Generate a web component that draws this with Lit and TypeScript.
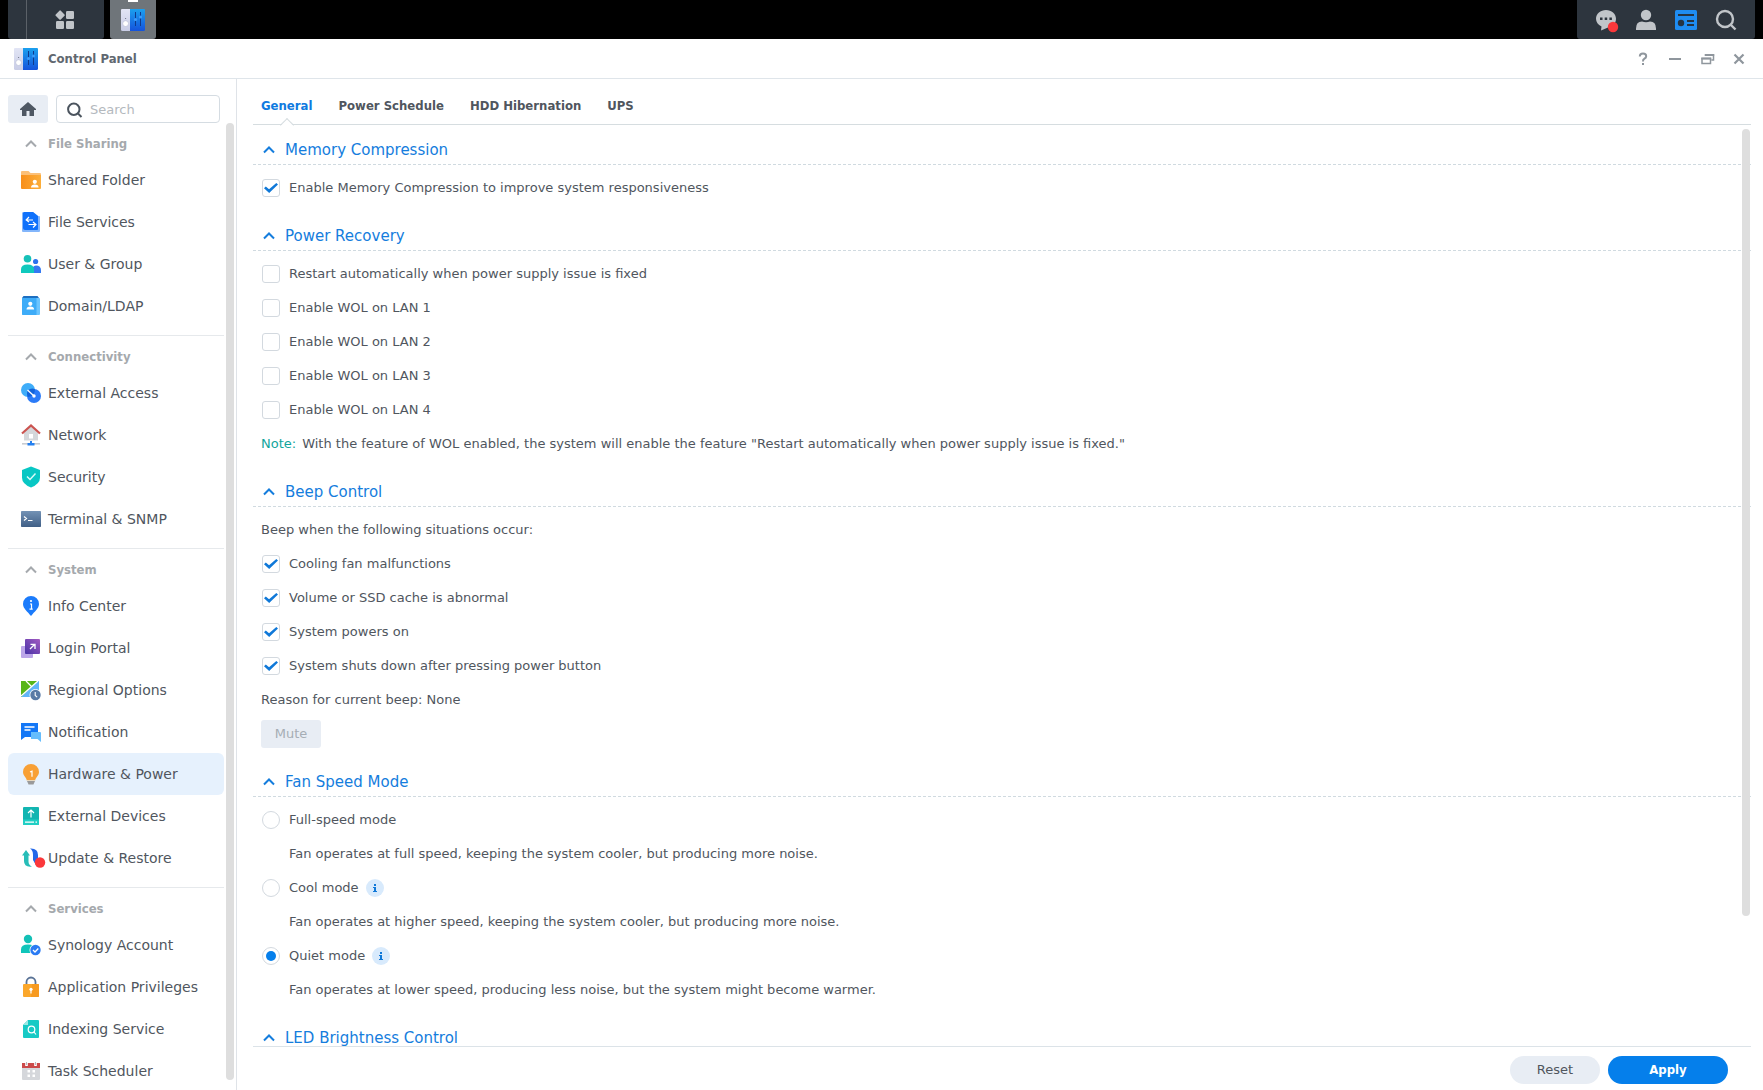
import { LitElement, html, css, svg } from "lit";
import { customElement, property, state } from "lit/decorators.js";
import { classMap } from "lit/directives/class-map.js";

const panelIcon = html`<svg width="24" height="22" viewBox="0 0 24 22" aria-hidden="true">
  <defs>
    <linearGradient id="blue" x1="0" y1="0" x2="0" y2="1"><stop offset="0" stop-color="#1ba0ee" /><stop offset="1" stop-color="#1453dc" /></linearGradient>
    <linearGradient id="pale" x1="0" y1="0" x2="0" y2="1"><stop offset="0" stop-color="#e2e5f5" /><stop offset="1" stop-color="#c9cde6" /></linearGradient>
  </defs>
  <path d="M1 0h8v22H1.500Q0 22 0 20.500V1Q0 0 1 0z" fill="url(#pale)" />
  <path d="M9 0h14q1 0 1 1v19.500q0 1.500-1.500 1.500H9z" fill="url(#blue)" />
  <circle cx="4.600" cy="14.600" r="2.900" fill="#fff" stroke="#b4b9d4" stroke-width=".6" />
  <circle cx="4.600" cy="9.500" r=".6" fill="#666c80" />
  <path d="M14.500 3v14M19.500 3v14" stroke="#0f3a8c" stroke-width="1" />
  <circle cx="14.500" cy="10.500" r="1.600" fill="#3b9bfa" />
  <circle cx="19.500" cy="8" r="1.600" fill="#3b9bfa" />
</svg>`;

const chevron = html`<svg width="12" height="8" viewBox="0 0 12 8" fill="none" stroke="currentColor" stroke-width="2" aria-hidden="true"><path d="M1 6.500 6 1.500l5 5" /></svg>`;

const icons: Record<string, unknown> = {
  folder: svg`<path d="M1 3q0-1 1-1h6.500l2 2H20q1 0 1 1v4H1z" fill="#fcc078"/><path d="M1 6h20v13q0 1-1 1H2q-1 0-1-1z" fill="url(#g)"/><defs><linearGradient id="g"><stop offset="0" stop-color="#f88f1b"/><stop offset="1" stop-color="#fcae3a"/></linearGradient></defs><circle cx="14.800" cy="12.800" r="2.100" fill="#fff"/><path d="M11 18.500q0-3 3.800-3t3.800 3z" fill="#fff"/>`,
  files: svg`<path d="M4 1h9l5 4h1q1 0 1 1v14q0 1-1 1H3q-1 0-1-1V2q0-1 2-1z" fill="#83b6fb"/><path d="M4 1h9l5 4v13q0 1-1 1H5q-2 0-2-2V2z" fill="#0f71fb"/><path d="M13 9H6.500m2.500-3L6.200 9 9 11M8.500 13.500h7m-2.500-2.500 3 2.500-3 3" fill="none" stroke="#fff" stroke-width="1.200"/>`,
  group: svg`<circle cx="7.500" cy="5.700" r="3.800" fill="#17c1b8"/><circle cx="15.600" cy="8.500" r="2.600" fill="#2a72ee"/><path d="M13 20v-6q1-1.500 3-1.500 5 0 5 5V20z" fill="#3479f2"/><path d="M1 20v-3.500Q1 11.500 7.500 11.500T14 16.500V20z" fill="#10c9bd"/>`,
  domain: svg`<path d="M3.500 1h14l1.500 2H2z" fill="#1d6fc0"/><path d="M2 3h17q1 0 1 1v15q0 1-1 1H3q-1 0-1-1z" fill="#6cc5ff"/><path d="M2 3h14.500v17H3q-1 0-1-1z" fill="#3eacf8"/><circle cx="10.300" cy="8.800" r="2.100" fill="#fff"/><path d="M6.500 14.500q0-3 3.800-3t3.800 3z" fill="#fff"/>`,
  access: svg`<circle cx="8" cy="8" r="7" fill="#3fadf9"/><circle cx="14" cy="14" r="7" fill="#2b7bf8"/><path d="M8 8a7 7 0 0 1 6.900-1A7 7 0 0 1 8 14.900 7 7 0 0 1 8 8z" fill="#1263da"/><path d="m7.500 8 7 6.500" stroke="#fff" stroke-width="1.300"/><circle cx="14" cy="14" r="1.700" fill="#fff"/>`,
  network: svg`<path d="M11 1.500 4 8.500v8h14v-8z" fill="#d5d7da"/><rect x="9" y="10" width="4" height="4.500" fill="#fff"/><path d="m2 9.500 9-8 9 8" fill="none" stroke="#cb5450" stroke-width="2.200"/><rect x="2" y="19" width="18" height="1.600" fill="#c9ccd1"/><path d="M10 17h2v2h2.500v2.500h-7V19H10z" fill="#2580ef"/>`,
  shield: svg`<path d="M11 .500 20 4v7.500q0 6.500-9 10-9-3.500-9-10V4z" fill="#08c7c4"/><path d="m7 10.500 3 3 5.500-6" fill="none" stroke="#d9fbf8" stroke-width="1.500"/>`,
  terminal: svg`<defs><linearGradient id="t" x2="0" y2="1"><stop offset="0" stop-color="#7392b5"/><stop offset="1" stop-color="#405f86"/></linearGradient></defs><rect x="1" y="3" width="20" height="16" rx=".8" fill="url(#t)"/><path d="m4 8.500 2.500 2L4 12.500M8 12.500h4.500" fill="none" stroke="#fff" stroke-width="1.200"/>`,
  info: svg`<path d="M11 1a8 8 0 0 1 8 8c0 4.500-4.500 7.500-8 12-3.500-4.500-8-7.500-8-12a8 8 0 0 1 8-8z" fill="#1b7bfb"/><path d="M10 9h1.500v5M9.500 14.200h3.200" stroke="#fff" stroke-width="1.200" fill="none"/><circle cx="11" cy="6" r="1.100" fill="#fff"/>`,
  portal: svg`<rect x="1" y="9" width="12" height="12" rx="1" fill="#bca6e9"/><defs><linearGradient id="p" x1="1" x2="0" y2="1"><stop offset="0" stop-color="#a45bc2"/><stop offset="1" stop-color="#4632a6"/></linearGradient></defs><rect x="5" y="2" width="15" height="15" rx="1" fill="url(#p)"/><path d="m10 12 4.500-4.500M10.500 7.300H15V12" fill="none" stroke="#fff" stroke-width="1.300"/>`,
  region: svg`<path d="M1 2h18v16H1z" fill="#62b5f8"/><path d="M1 2h17L1 18z" fill="#57b518"/><path d="M1 17 18 2M6 2l6 6" stroke="#fff" stroke-width="1.300"/><circle cx="15.500" cy="16" r="6" fill="#fff"/><circle cx="15.500" cy="16" r="5.200" fill="#5a7ba6"/><path d="M15.200 13v3.500l2 1.700" fill="none" stroke="#fff" stroke-width="1.100"/>`,
  notify: svg`<path d="M1 2h17v14H5l-4 3z" fill="#1377f6"/><path d="M11 11h9q1 0 1 1v9l-3.500-3H11z" fill="#66bdfc"/><path d="M4.500 6h10M4.500 9h6" stroke="#fff" stroke-width="1.300"/>`,
  bulb: svg`<path d="M7 18h8l-1.500 3.500h-5z" fill="#9a9a9a"/><path d="M11 1a8 8 0 0 1 8 8c0 4-3.500 5-4 9H7c-.500-4-4-5-4-9a8 8 0 0 1 8-8z" fill="#f8a035"/><path d="M7 17.500h8" stroke="#e8d9c0"/><path d="M10 9l2-.800v5.500" fill="none" stroke="#fff" stroke-width="1.200"/>`,
  devices: svg`<rect x="3" y="2" width="16" height="18" rx="1" fill="#12b5b1"/><path d="M3 14.500h16V19q0 1-1 1H4q-1 0-1-1z" fill="#20cfc4"/><path d="M11 12.500v-7M8 8l3-3 3 3" fill="none" stroke="#fff" stroke-width="1.200"/><path d="M5 17.200h9M15.500 17.200H17" stroke="#fff" stroke-width="1.300"/>`,
  update: svg`<path d="m6 3 4 5.500H8.500v6Q8.500 18 12 19.500 4 20.500 4 14V8.500H2z" fill="#27bdb8"/><path d="M10 1.500q8-.500 8 6.500v5h2l-4 5-3-5V8q0-5-3-6.500z" fill="#2368e8"/><circle cx="20" cy="15.500" r="5.200" fill="#fb383b"/>`,
  account: svg`<circle cx="8" cy="5" r="4.200" fill="#13c0b6"/><path d="M1 19v-3.500Q1 10.500 8 10.500T14.500 15v4z" fill="#10c5ba"/><circle cx="15.500" cy="16" r="6" fill="#fff"/><circle cx="15.500" cy="16" r="5.200" fill="#2b7bf3"/><path d="m13 16 2 2 3.300-3.500" fill="none" stroke="#fff" stroke-width="1.300"/>`,
  lock: svg`<path d="M6.500 9V6a4.500 4.500 0 0 1 9 0v3" fill="none" stroke="#5a7396" stroke-width="1.800"/><rect x="3" y="8" width="16" height="13" rx="1" fill="#fba72b"/><path d="M12 8h6q1 0 1 1v11q0 1-1 1h-7z" fill="#f79a20"/><circle cx="11" cy="13.300" r="1.600" fill="#fff"/><path d="M11 13v4.500" stroke="#fff" stroke-width="1.200"/>`,
  indexing: svg`<path d="M8 2h10q1 0 1 1v16q0 1-1 1H4q-1 0-1-1V7z" fill="#17cac5"/><path d="M8 2v5H3z" fill="#9ae9e4"/><circle cx="11.500" cy="11.500" r="3.300" fill="none" stroke="#fff" stroke-width="1.200"/><path d="m14 14 2 2.500" stroke="#fff" stroke-width="1.200"/>`,
  calendar: svg`<path d="M2 7h18v12q0 1-1 1H3q-1 0-1-1z" fill="#d5d7db"/><path d="M2 3h18v5H2z" fill="#cb4a4a"/><path d="M6.500 2v4M15.500 2v4" stroke="#fff" stroke-width="2.600"/><path d="M6.500 2v3M15.500 2v3" stroke="#b6babf" stroke-width="1"/><path d="M7.500 10h2.500v2.500H7.500zM12.500 10H15v2.500h-2.500zM7.500 14.500h2.500V17H7.500zM12.500 14.500H15V17h-2.500z" fill="#fff"/>`,
};

interface Entry {
  label: string;
  icon: string;
}

const groups: { title: string; entries: Entry[] }[] = [
  {
    title: "File Sharing",
    entries: [
      { label: "Shared Folder", icon: "folder" },
      { label: "File Services", icon: "files" },
      { label: "User & Group", icon: "group" },
      { label: "Domain/LDAP", icon: "domain" },
    ],
  },
  {
    title: "Connectivity",
    entries: [
      { label: "External Access", icon: "access" },
      { label: "Network", icon: "network" },
      { label: "Security", icon: "shield" },
      { label: "Terminal & SNMP", icon: "terminal" },
    ],
  },
  {
    title: "System",
    entries: [
      { label: "Info Center", icon: "info" },
      { label: "Login Portal", icon: "portal" },
      { label: "Regional Options", icon: "region" },
      { label: "Notification", icon: "notify" },
      { label: "Hardware & Power", icon: "bulb" },
      { label: "External Devices", icon: "devices" },
      { label: "Update & Restore", icon: "update" },
    ],
  },
  {
    title: "Services",
    entries: [
      { label: "Synology Account", icon: "account" },
      { label: "Application Privileges", icon: "lock" },
      { label: "Indexing Service", icon: "indexing" },
      { label: "Task Scheduler", icon: "calendar" },
    ],
  },
];

const resets = css`
  * {
    box-sizing: border-box;
  }
  button {
    font: inherit;
    color: inherit;
    background: none;
    border: 0;
    padding: 0;
    margin: 0;
    cursor: pointer;
  }
  svg {
    display: block;
    flex: none;
    overflow: visible;
  }
  .strong {
    font-family: "DejaVu Sans Condensed", "Noto Sans", sans-serif;
    font-size: 13px;
    font-weight: bold;
  }
`;

@customElement("desk-taskbar")
class DeskTaskbar extends LitElement {
  static styles = [
    resets,
    css`
      :host {
        display: flex;
        flex: none;
        height: 39px;
        padding: 0 8px;
        gap: 6px;
        background: #000;
        color: #c1c5c9;
      }
      .block {
        display: flex;
        align-items: center;
        background: #2d353e;
        border-radius: 0 0 3px 3px;
      }
      .launcher {
        width: 96px;
        padding-left: 18px;
      }
      .menu {
        display: grid;
        place-items: center;
        flex: 1;
        height: 39px;
        padding-right: 2px;
        border-left: 1px solid #5b6168;
      }
      .app {
        position: relative;
        display: grid;
        place-items: center;
        width: 46px;
        height: 39px;
        background: #6f757a;
        border-radius: 0 0 3px 3px;
      }
      .app::before {
        content: "";
        position: absolute;
        top: 0;
        left: 18px;
        width: 10px;
        height: 2px;
        background: #fff;
      }
      .tray {
        margin-left: auto;
        padding: 0 18px;
        gap: 18px;
      }
    `,
  ];
  render() {
    return html`
      <div class="block launcher">
        <button class="menu" aria-label="Main Menu">
          <svg width="20" height="20" viewBox="0 0 20 20" fill="currentColor">
            <rect x="1.500" y="1.500" width="7.200" height="7.200" rx="1" transform="rotate(45 5.100 5.100)" />
            <rect x="11" y="1" width="8" height="8" rx="1.200" />
            <rect x="1" y="11" width="8" height="8" rx="1.200" />
            <rect x="11" y="11" width="8" height="8" rx="1.200" />
          </svg>
        </button>
      </div>
      <button class="app" aria-label="Control Panel">${panelIcon}</button>
      <div class="block tray">
        <button aria-label="Notifications">
          <svg width="22" height="22" viewBox="0 0 22 22">
            <path d="M11 1c5.500 0 10 3.800 10 8.800s-4 8.200-8 8.700L6 21.500l.500-4C3 16 1 13 1 9.800 1 4.800 5.500 1 11 1z" fill="currentColor" />
            <path d="M5 8.500h2.500V11H5zM9.700 8.500h2.500V11H9.700zM14.400 8.500h2.500V11h-2.500z" fill="#2d353e" />
            <circle cx="18" cy="18" r="5.200" fill="#fb383b" />
          </svg>
        </button>
        <button aria-label="Options">
          <svg width="22" height="22" viewBox="0 0 22 22" fill="currentColor">
            <circle cx="11" cy="6" r="5.200" />
            <path d="M1 21v-1.500q0-7 6-7 4 1.500 8 0 6 0 6 7V21z" />
          </svg>
        </button>
        <button aria-label="Widgets">
          <svg width="22" height="22" viewBox="0 0 22 22">
            <rect y="1" width="22" height="20" rx="1.500" fill="#1f8df2" />
            <path d="M3 6h16M12 12h7M12 16h7" stroke="#263442" stroke-width="2" />
            <circle cx="6" cy="14" r="3.200" fill="#263442" />
          </svg>
        </button>
        <button aria-label="Search">
          <svg width="22" height="22" viewBox="0 0 22 22" fill="none" stroke="currentColor" stroke-width="2.400">
            <circle cx="10" cy="10" r="8" />
            <path d="m15.500 15.500 5 5" />
          </svg>
        </button>
      </div>
    `;
  }
}

@customElement("side-nav")
class SideNav extends LitElement {
  @state() selected = "Hardware & Power";

  static styles = [
    resets,
    css`
      :host {
        display: flex;
        flex-direction: column;
        flex: none;
        width: 237px;
        min-height: 0;
        padding: 16px 2px 0 8px;
        border-right: 1px solid #dfe3e8;
      }
      .tools {
        display: flex;
        flex: none;
        gap: 8px;
        height: 28px;
        padding-right: 6px;
        margin-right: 8px;
      }
      .home {
        display: grid;
        place-items: center;
        width: 40px;
        background: #e8edf4;
        border-radius: 3px;
        color: #4f5863;
      }
      .search {
        display: flex;
        align-items: center;
        gap: 8px;
        flex: 1;
        min-width: 0;
        padding: 1px 10px 0;
        border: 1px solid #d5dce2;
        border-radius: 4px;
        color: #4b545e;
      }
      .search input {
        width: 100%;
        min-width: 0;
        padding: 0;
        border: 0;
        outline: 0;
        background: none;
        font: inherit;
        font-size: 13px;
      }
      .search input::placeholder {
        color: #b4b9be;
        opacity: 1;
      }
      .scroller {
        display: flex;
        flex: 1;
        min-height: 0;
      }
      .list {
        flex: 1;
        overflow: hidden;
      }
      .track {
        width: 10px;
        padding: 0 0 10px 2px;
      }
      .thumb {
        height: 100%;
        border-radius: 4px;
        background: #dedede;
      }
      .group + .group {
        margin-top: 8px;
        border-top: 1px solid #e6e9ec;
      }
      .title {
        display: flex;
        align-items: center;
        gap: 11px;
        width: 100%;
        height: 36px;
        padding: 5px 0 0 17px;
        color: #a5a9ad;
      }
      .entry {
        display: flex;
        align-items: center;
        gap: 6px;
        width: 100%;
        height: 42px;
        padding: 0 12px;
        border-radius: 6px;
        font-size: 14px;
        white-space: nowrap;
      }
      .selected {
        background: #e6f1fd;
      }
    `,
  ];
  render() {
    return html`
      <div class="tools">
        <button class="home" aria-label="Home">
          <svg width="16" height="14" viewBox="0 0 16 14" fill="currentColor"><path d="M8 0 0 7v1h2v6h4.500V9h3v5H14V8h2V7z" /></svg>
        </button>
        <label class="search">
          <svg width="15" height="16" viewBox="0 0 15 16" fill="none" stroke="currentColor" stroke-width="2"><circle cx="6.800" cy="7.200" r="5.700" /><path d="m10.500 11 4 4" /></svg>
          <input type="text" placeholder="Search" aria-label="Search" />
        </label>
      </div>
      <div class="scroller">
        <nav class="list">
          ${groups.map(
            (g) => html`<div class="group">
              <button class="title strong">${chevron}<span>${g.title}</span></button>
              ${g.entries.map(
                (e) => html`<button
                  class=${classMap({ entry: true, selected: e.label === this.selected })}
                  @click=${() => (this.selected = e.label)}
                >
                  <svg width="22" height="22" viewBox="0 0 22 22" aria-hidden="true">${icons[e.icon]}</svg>
                  <span>${e.label}</span>
                </button>`,
              )}
            </div>`,
          )}
        </nav>
        <div class="track"><div class="thumb"></div></div>
      </div>
    `;
  }
}

@customElement("option-section")
class OptionSection extends LitElement {
  @property() heading = "";

  static styles = [
    resets,
    css`
      :host {
        display: block;
      }
      .heading {
        display: flex;
        align-items: center;
        gap: 10px;
        width: 100%;
        height: 29px;
        padding-left: 10px;
        border-bottom: 1px dashed #d0dae0;
        color: #157ddd;
        font-size: 15px;
      }
      .body {
        padding: 6px 0 0 8px;
      }
    `,
  ];
  render() {
    return html`<button class="heading">${chevron}<span>${this.heading}</span></button>
      <div class="body"><slot></slot></div>`;
  }
}

@customElement("hardware-page")
class HardwarePage extends LitElement {
  @state() tab = "General";

  static styles = [
    resets,
    css`
      :host {
        display: flex;
        flex-direction: column;
        flex: 1;
        min-width: 0;
        padding: 0 12px 0 16px;
      }
      .tabs {
        display: flex;
        flex: none;
        gap: 26px;
        height: 46px;
        padding: 0 8px;
        border-bottom: 1px solid #d6dde0;
      }
      .tab {
        position: relative;
        padding-bottom: 8px;
        padding-top: 17px;
      }
      .active {
        color: #0f7ae0;
      }
      .active::after {
        content: "";
        position: absolute;
        left: 50%;
        bottom: -6px;
        width: 9px;
        height: 9px;
        margin-left: -5px;
        transform: rotate(45deg);
        border: solid #d6dde0;
        border-width: 1px 0 0 1px;
        background: linear-gradient(135deg, #fff 50%, transparent 50%);
      }
      .view {
        position: relative;
        flex: 1;
        min-height: 0;
        padding-top: 11px;
        overflow: hidden;
      }
      .thumb {
        position: absolute;
        top: 4px;
        right: 1px;
        width: 8px;
        height: 86%;
        max-height: 787px;
        border-radius: 4px;
        background: #dedede;
      }
      option-section + option-section {
        margin-top: 17px;
      }
      .row {
        display: flex;
        align-items: center;
        height: 34px;
      }
      .choice {
        display: flex;
        align-items: center;
        gap: 9px;
      }
      .choice input {
        appearance: none;
        display: grid;
        place-items: center;
        width: 18px;
        height: 18px;
        margin: 0 0 0 1px;
        border: 1px solid #d3d9df;
        border-radius: 3px;
        background: #fff;
      }
      .choice input[type="radio"] {
        border-radius: 50%;
      }
      .choice input[type="radio"]:checked::before {
        content: "";
        width: 10px;
        height: 10px;
        border-radius: 50%;
        background: #057feb;
      }
      .choice input[type="checkbox"]:checked::before {
        content: "";
        width: 14px;
        height: 10px;
        background: #0f78d8;
        clip-path: polygon(0 52%, 13% 34%, 36% 62%, 88% 0, 100% 14%, 37% 100%);
      }
      .detail {
        padding-left: 28px;
      }
      .note {
        margin-right: 6px;
        color: #12a59c;
      }
      .mute {
        width: 60px;
        height: 28px;
        border-radius: 3px;
        background: #e8edf4;
        color: #a6adb5;
      }
      .tip {
        margin-left: 7px;
      }
      .footer {
        display: flex;
        flex: none;
        align-items: center;
        justify-content: flex-end;
        gap: 8px;
        height: 44px;
        padding: 3px 23px 0 0;
        border-top: 1px solid #dce3e8;
      }
      .reset,
      .apply {
        height: 28px;
        border-radius: 14px;
      }
      .reset {
        width: 90px;
        background: #e8edf4;
      }
      .apply {
        width: 120px;
        background: #057feb;
        color: #fff;
      }
    `,
  ];

  private check(label: string, on = false) {
    return html`<div class="row"><label class="choice"><input type="checkbox" .checked=${on} /><span>${label}</span></label></div>`;
  }

  private mode(label: string, detail: string, on = false, tip = false) {
    return html`<div class="row">
        <label class="choice"><input type="radio" name="fan" .checked=${on} /><span>${label}</span></label>
        ${tip
          ? html`<button class="tip" aria-label="About ${label}">
              <svg width="18" height="18" viewBox="0 0 18 18">
                <circle cx="9" cy="9" r="9" fill="#d8eafc" />
                <path d="M8 5h2v2H8zM7 8h3v4h1v1H7v-1h1V9H7z" fill="#0f78d8" />
              </svg>
            </button>`
          : null}
      </div>
      <div class="row detail">${detail}</div>`;
  }

  render() {
    return html`
      <div class="tabs" role="tablist">
        ${["General", "Power Schedule", "HDD Hibernation", "UPS"].map(
          (t) => html`<button
            role="tab"
            aria-selected=${t === this.tab}
            class=${classMap({ tab: true, strong: true, active: t === this.tab })}
            @click=${() => (this.tab = t)}
          >
            ${t}
          </button>`,
        )}
      </div>
      <div class="view">
        <option-section heading="Memory Compression">
          ${this.check("Enable Memory Compression to improve system responsiveness", true)}
        </option-section>
        <option-section heading="Power Recovery">
          ${this.check("Restart automatically when power supply issue is fixed")}
          ${[1, 2, 3, 4].map((n) => this.check(`Enable WOL on LAN ${n}`))}
          <div class="row">
            <span class="note">Note:</span>
            <span>With the feature of WOL enabled, the system will enable the feature "Restart automatically when power supply issue is fixed."</span>
          </div>
        </option-section>
        <option-section heading="Beep Control">
          <div class="row">Beep when the following situations occur:</div>
          ${this.check("Cooling fan malfunctions", true)} ${this.check("Volume or SSD cache is abnormal", true)}
          ${this.check("System powers on", true)} ${this.check("System shuts down after pressing power button", true)}
          <div class="row">Reason for current beep: None</div>
          <div class="row"><button class="mute" disabled>Mute</button></div>
        </option-section>
        <option-section heading="Fan Speed Mode">
          ${this.mode("Full-speed mode", "Fan operates at full speed, keeping the system cooler, but producing more noise.")}
          ${this.mode("Cool mode", "Fan operates at higher speed, keeping the system cooler, but producing more noise.", false, true)}
          ${this.mode("Quiet mode", "Fan operates at lower speed, producing less noise, but the system might become warmer.", true, true)}
        </option-section>
        <option-section heading="LED Brightness Control"></option-section>
        <div class="thumb"></div>
      </div>
      <div class="footer">
        <button class="reset">Reset</button>
        <button class="apply strong">Apply</button>
      </div>
    `;
  }
}

@customElement("app-root")
class AppRoot extends LitElement {
  static styles = [
    resets,
    css`
      :host {
        display: flex;
        flex-direction: column;
        height: 100vh;
        overflow: hidden;
        background: #fff;
        color: #50565e;
        font-family: Verdana, "DejaVu Sans", sans-serif;
        font-size: 13px;
        line-height: 20px;
      }
      .titlebar {
        display: flex;
        align-items: center;
        flex: none;
        height: 40px;
        padding: 0 16px 0 14px;
        gap: 10px;
        border-bottom: 1px solid #dfe5ea;
        color: #616870;
      }
      .title {
        margin: 0;
      }
      .actions {
        display: flex;
        gap: 16px;
        margin-left: auto;
        color: #8f969d;
      }
      .content {
        display: flex;
        flex: 1;
        min-height: 0;
      }
    `,
  ];
  render() {
    return html`
      <desk-taskbar></desk-taskbar>
      <header class="titlebar">
        ${panelIcon}
        <h1 class="title strong">Control Panel</h1>
        <div class="actions">
          <button aria-label="Help">
            <svg width="16" height="16" viewBox="0 0 16 16" fill="none" stroke="currentColor" stroke-width="2"><path d="M4.800 5.500q0-3 3.200-3t3.200 2.700q0 1.500-1.700 2.500T8 10.500M8 12v2" /></svg>
          </button>
          <button aria-label="Minimize">
            <svg width="16" height="16" viewBox="0 0 16 16" stroke="currentColor" stroke-width="2"><path d="M2 8h12" /></svg>
          </button>
          <button aria-label="Restore">
            <svg width="16" height="16" viewBox="0 0 16 16" fill="none" stroke="currentColor" stroke-width="1.500"><path d="M6.500 4h8v5H12.500M3 7.500h8.500v5H3z" /><path d="M2.300 7.500h9.900M5.700 4h9.500" stroke-width="2" /></svg>
          </button>
          <button aria-label="Close">
            <svg width="16" height="16" viewBox="0 0 16 16" stroke="currentColor" stroke-width="2.200"><path d="m3.500 3.500 9 9M12.500 3.500l-9 9" /></svg>
          </button>
        </div>
      </header>
      <div class="content">
        <side-nav></side-nav>
        <hardware-page></hardware-page>
      </div>
    `;
  }
}
